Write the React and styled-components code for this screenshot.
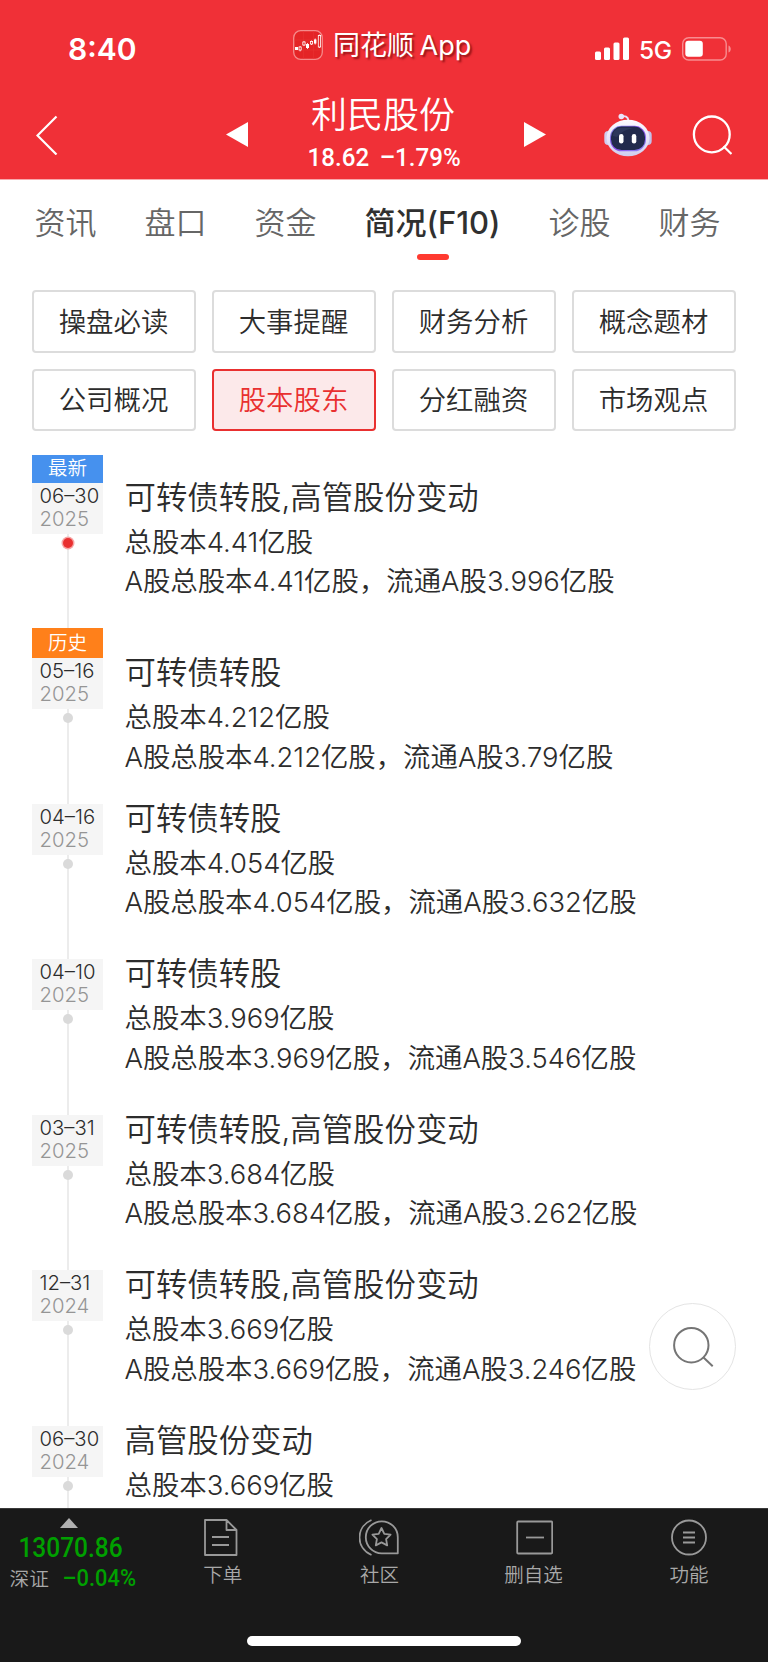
import React from "react";
import styled, { createGlobalStyle } from "styled-components";

const GlobalStyle = createGlobalStyle`
  * {
    box-sizing: border-box;
  }
  body {
    margin: 0;
    background: #fff;
    font-family: Inter, "Noto Sans CJK SC", sans-serif;
    font-weight: 350;
    color: #2c2c2c;
  }
`;

const tabs = ["资讯", "盘口", "资金", "简况(F10)", "诊股", "财务"];

const sections = [
  "操盘必读",
  "大事提醒",
  "财务分析",
  "概念题材",
  "公司概况",
  "股本股东",
  "分红融资",
  "市场观点",
];

const records = [
  {
    tag: "最新",
    color: "#4691ee",
    tagHeight: 28,
    date: "06–30",
    year: "2025",
    title: "可转债转股,高管股份变动",
    total: "总股本4.41亿股",
    detail: "A股总股本4.41亿股，流通A股3.996亿股",
  },
  {
    tag: "历史",
    color: "#ff801a",
    tagHeight: 30,
    date: "05–16",
    year: "2025",
    title: "可转债转股",
    total: "总股本4.212亿股",
    detail: "A股总股本4.212亿股，流通A股3.79亿股",
  },
  {
    date: "04–16",
    year: "2025",
    title: "可转债转股",
    total: "总股本4.054亿股",
    detail: "A股总股本4.054亿股，流通A股3.632亿股",
  },
  {
    date: "04–10",
    year: "2025",
    title: "可转债转股",
    total: "总股本3.969亿股",
    detail: "A股总股本3.969亿股，流通A股3.546亿股",
  },
  {
    date: "03–31",
    year: "2025",
    title: "可转债转股,高管股份变动",
    total: "总股本3.684亿股",
    detail: "A股总股本3.684亿股，流通A股3.262亿股",
  },
  {
    date: "12–31",
    year: "2024",
    title: "可转债转股,高管股份变动",
    total: "总股本3.669亿股",
    detail: "A股总股本3.669亿股，流通A股3.246亿股",
  },
  {
    date: "06–30",
    year: "2024",
    title: "高管股份变动",
    total: "总股本3.669亿股",
  },
];

const AppLogo = () => (
  <svg width="30" height="30" viewBox="0 0 30 30">
    <rect x="0.7" y="0.7" width="28.6" height="28.6" rx="7" fill="#e42426" stroke="#f58a8a" strokeWidth="1.3" />
    <path d="M10.5 1v28M20.5 1v28M1 10h28M1 20h28" stroke="#e93535" strokeWidth="0.5" />
    <g fill="#fff">
      <rect x="2" y="17" width="3" height="3" />
      <rect x="13" y="14" width="3" height="4" />
      <rect x="21" y="9.5" width="2.4" height="4" />
    </g>
    <g fill="none" stroke="#fff" strokeWidth="0.8">
      <rect x="6" y="17" width="2.2" height="3" />
      <path d="M7.1 16V17M7.1 20v1.4M11 11v1M11 15v1M14.5 13v6M18.5 10.500v1M18.5 14v1M22.2 8.5v6M26.4 4.500v1M26.4 17v1" />
      <rect x="9.8" y="12" width="2.3" height="3" />
      <rect x="17.4" y="11.5" width="2.2" height="2.5" />
      <rect x="25.3" y="5.5" width="2.3" height="11.5" />
    </g>
  </svg>
);

const Robot = () => (
  <svg width="50" height="46" viewBox="0 0 50 46">
    <defs>
      <linearGradient id="shell" x1="0" y1="0" x2="0" y2="1">
        <stop offset="0" stopColor="#fdfaff" />
        <stop offset="0.6" stopColor="#e4e0f7" />
        <stop offset="1" stopColor="#cfcdef" />
      </linearGradient>
      <linearGradient id="visor" x1="0" y1="0" x2="1" y2="1">
        <stop offset="0" stopColor="#7b8ce0" />
        <stop offset="0.5" stopColor="#8a4bea" />
        <stop offset="1" stopColor="#8d8cf5" />
      </linearGradient>
    </defs>
    <path d="M18 4.500c4-1 7 0 7.500 4" fill="none" stroke="#e8e2f8" strokeWidth="1.9" />
    <circle cx="18.300" cy="4.500" r="2.800" fill="#eae4fa" />
    <rect x="1.300" y="19" width="8" height="14" rx="4" fill="#d0cdf0" />
    <rect x="40.700" y="19" width="8" height="14" rx="4" fill="#c4c0ea" />
    <ellipse cx="25" cy="26" rx="21.500" ry="18.300" fill="url(#shell)" />
    <rect x="7" y="13.800" width="36" height="25.500" rx="11.500" fill="url(#visor)" />
    <rect x="8" y="14.600" width="34" height="23.500" rx="10.500" fill="#222a4c" />
    <path d="M10 24c0-6 4-8 9-8h12c-7 1-13 4-17 9z" fill="#38436a" opacity="0.5" />
    <rect x="16" y="22" width="4.500" height="9.500" rx="2.200" fill="#fff" />
    <rect x="28.800" y="22" width="4.500" height="9.500" rx="2.200" fill="#fff" />
  </svg>
);

const SearchIcon = () => (
  <svg width="40" height="40" viewBox="0 0 40 40" fill="none" stroke="#fff" strokeWidth="2.3">
    <circle cx="19.800" cy="19.400" r="17.900" />
    <path d="M31.500 31.200l8 7.800" />
  </svg>
);

const FloatingSearchIcon = () => (
  <svg width="42" height="42" viewBox="0 0 42 42" fill="none" stroke="#757575" strokeWidth="2">
    <circle cx="19.300" cy="19.200" r="17.200" />
    <path d="M31 31l9.700 9.300" />
  </svg>
);

const OrderIcon = () => (
  <svg width="40" height="38" viewBox="0 0 40 38">
    <path d="M2 1h21.500l10 10v25h-31.500zM23.500 1v10h10M9 18h17M9 26h17" />
  </svg>
);

const CommunityIcon = () => (
  <svg width="42" height="38" viewBox="0 0 42 38">
    <path d="M12.500 1C-3.500 8-3.500 29 12.500 36" />
    <path d="M22.800 2.300a16 16 0 1 0 0 32h16V18.300a16 16 0 0 0-16-16z" />
    <path d="M22.500 9l2.800 5.800 6.300.9-4.500 4.400 1.100 6.300-5.700-3-5.700 3 1.100-6.300-4.500-4.400 6.300-.9z" />
  </svg>
);

const RemoveIcon = () => (
  <svg width="38" height="38" viewBox="0 0 38 38">
    <rect x="2.200" y="2.500" width="35" height="32" rx="1" />
    <path d="M11 18.500h18" />
  </svg>
);

const MenuIcon = () => (
  <svg width="38" height="38" viewBox="0 0 38 38">
    <circle cx="19" cy="18.500" r="17" />
    <path d="M13 13.500h12M13 18.500h12M13 23.500h12" />
  </svg>
);

const navItems = [
  { label: "下单", Icon: OrderIcon },
  { label: "社区", Icon: CommunityIcon },
  { label: "删自选", Icon: RemoveIcon },
  { label: "功能", Icon: MenuIcon },
];

const App = () => {
  return (
    <>
      <GlobalStyle />
      <Screen>
        <Header>
          <StatusBar>
            <Clock>8:40</Clock>
            <Brand>
              <AppLogo />
              <span>同花顺 App</span>
            </Brand>
            <Signals>
              <svg width="34" height="23" viewBox="0 0 34 23" fill="#fff">
                <rect x="0" y="14.500" width="6" height="8.500" rx="1.500" />
                <rect x="9" y="10.500" width="6" height="12.500" rx="1.500" />
                <rect x="18.500" y="5.500" width="6" height="17.500" rx="1.500" />
                <rect x="28" y="0.500" width="6" height="22.500" rx="1.500" />
              </svg>
              <Network>5G</Network>
              <svg width="50" height="24" viewBox="0 0 50 24">
                <rect x="0.700" y="0.700" width="43.500" height="22.300" rx="6" fill="none" stroke="#f88c90" strokeWidth="1.400" />
                <rect x="3.300" y="3.800" width="17.500" height="16" rx="3" fill="#fff" />
                <path d="M46.500 8.500c3 1 3 6 0 7z" fill="#f88c90" />
              </svg>
            </Signals>
          </StatusBar>
          <TitleBar>
            <svg width="24" height="40" viewBox="0 0 24 40" fill="none" stroke="#fff" strokeWidth="2.2">
              <path d="M20.500 1.500L1.500 20.500l19 19" />
            </svg>
            <Arrow viewBox="0 0 22 25">
              <path d="M22 0v25L0 12.500z" />
            </Arrow>
            <Stock>
              <StockName>利民股份</StockName>
              <StockPrice>18.62 –1.79%</StockPrice>
            </Stock>
            <Arrow viewBox="0 0 22 25">
              <path d="M0 0v25l22-12.500z" />
            </Arrow>
            <Robot />
            <SearchIcon />
          </TitleBar>
        </Header>

        <Tabs>
          {tabs.map((tab) => (
            <Tab key={tab} $active={tab === "简况(F10)"}>
              {tab}
            </Tab>
          ))}
        </Tabs>

        <Sections>
          {sections.map((name) => (
            <Section key={name} $active={name === "股本股东"}>
              {name}
            </Section>
          ))}
        </Sections>

        <Timeline>
          {records.map((item, i) => (
            <Record key={i} $tagHeight={item.tagHeight}>
              <Rail>
                {item.tag && (
                  <Tag $color={item.color} $height={item.tagHeight}>
                    {item.tag}
                  </Tag>
                )}
                <DateBox>
                  <div>{item.date}</div>
                  <Year>{item.year}</Year>
                </DateBox>
                <Track>
                  <Dot $current={i === 0} />
                </Track>
              </Rail>
              <Body $tagHeight={item.tagHeight}>
                <RecordTitle>{item.title}</RecordTitle>
                <RecordLine>{item.total}</RecordLine>
                {item.detail && <RecordLine>{item.detail}</RecordLine>}
              </Body>
            </Record>
          ))}
        </Timeline>

        <SearchButton>
          <FloatingSearchIcon />
        </SearchButton>

        <BottomBar>
          <NavRow>
            <Index>
              <Caret viewBox="0 0 18 10">
                <path d="M9 0l9 10H0z" />
              </Caret>
              <IndexValue>13070.86</IndexValue>
              <IndexChange>
                <span>深证</span>
                <Percent>–0.04%</Percent>
              </IndexChange>
            </Index>
            {navItems.map(({ label, Icon }) => (
              <NavItem key={label}>
                <Icon />
                <span>{label}</span>
              </NavItem>
            ))}
          </NavRow>
          <HomeIndicator />
        </BottomBar>
      </Screen>
    </>
  );
};

const Screen = styled.div`
  position: relative;
  display: flex;
  flex-direction: column;
  width: 768px;
  height: 1662px;
  overflow: hidden;
  background: #fff;
`;

const Header = styled.header`
  height: 180px;
  flex: none;
  border-bottom: 1px solid #f8a9ac;
  background: #f03037;
  color: #fff;
`;

const StatusBar = styled.div`
  display: grid;
  grid-template-columns: 293px 1fr 173px;
  height: 90px;
`;

const Clock = styled.div`
  padding: 31px 0 0 68px;
  font-size: 30px;
  line-height: 36px;
  font-weight: 600;
`;

const Brand = styled.div`
  display: flex;
  align-items: flex-start;
  gap: 10px;
  padding-top: 30px;
  font-size: 27px;
  line-height: 31px;
  font-weight: 400;
  white-space: nowrap;
  word-spacing: -2px;
  span {
    text-shadow: 2px 2px 2px rgba(90, 0, 0, 0.6);
  }
`;

const Signals = styled.div`
  display: flex;
  align-items: flex-start;
  padding-top: 37px;
`;

const Network = styled.div`
  width: 53px;
  padding-left: 10px;
  font-size: 24.5px;
  line-height: 27px;
  font-weight: 450;
  letter-spacing: -0.5px;
`;

const TitleBar = styled.div`
  display: grid;
  grid-template-columns: 190px 22px 276px 79px 89px 1fr;
  align-items: start;
  height: 89px;
  padding-left: 36px;
  > svg {
    margin-top: 25px;
  }
  > svg:nth-child(5) {
    margin-top: 22px;
  }
`;

const Arrow = styled.svg`
  width: 22px;
  height: 25px;
  fill: #fff;
  && {
    margin-top: 32px;
  }
`;

const Stock = styled.div`
  display: flex;
  flex-direction: column;
  align-items: center;
  padding-right: 6px;
  white-space: nowrap;
`;

const StockName = styled.div`
  margin-top: 5px;
  font-size: 36px;
  line-height: 40px;
`;

const StockPrice = styled.div`
  margin: 6px 0 0 3px;
  font-family: Roboto, sans-serif;
  font-size: 26.5px;
  line-height: 32px;
  font-weight: 500;
  word-spacing: 5px;
  transform: scaleX(0.91);
`;

const Tabs = styled.nav`
  display: flex;
  flex: none;
  gap: 48px;
  height: 110px;
  padding: 22px 0 0 34.5px;
`;

const Tab = styled.div`
  display: flex;
  flex-direction: column;
  align-items: center;
  font-size: 31px;
  line-height: 41px;
  white-space: nowrap;
  color: ${(props) => (props.$active ? "#303030" : "#666")};
  font-weight: ${(props) => (props.$active ? 500 : 350)};
  &::after {
    content: "";
    width: 32px;
    height: 6px;
    margin-top: 11px;
    border-radius: 3px;
    background: ${(props) => (props.$active ? "#ff3a30" : "transparent")};
  }
`;

const Sections = styled.div`
  display: grid;
  flex: none;
  grid-template-columns: repeat(4, 164px);
  grid-auto-rows: 62.5px;
  gap: 16px;
  padding: 0 32px;
`;

const Section = styled.div`
  display: flex;
  align-items: center;
  justify-content: center;
  padding: 0 1px 3px 0;
  border: 2px solid ${(props) => (props.$active ? "#e93030" : "#dcdcdc")};
  border-radius: 4px;
  background: ${(props) => (props.$active ? "#fce9ea" : "#fff")};
  color: ${(props) => (props.$active ? "#e93030" : "#2c2c2c")};
  font-size: 27.4px;
`;

const Timeline = styled.div`
  flex: 1;
  min-height: 0;
  overflow: hidden;
  padding: 24px 0 0 32px;
`;

const Record = styled.div`
  display: grid;
  grid-template-columns: 71px 1fr;
  column-gap: 21.5px;
  height: ${(props) => 145.4 + (props.$tagHeight || 10)}px;
  &:nth-child(n + 3) {
    height: 155.5px;
  }
`;

const Rail = styled.div`
  display: flex;
  flex-direction: column;
`;

const Tag = styled.div`
  height: ${(props) => props.$height}px;
  background: ${(props) => props.$color};
  color: #fff;
  font-size: 19.5px;
  line-height: ${(props) => (props.$height > 28 ? 31 : 26)}px;
  text-align: center;
`;

const DateBox = styled.div`
  height: 51px;
  padding: 1px 0 0 7.5px;
  background: #f5f5f5;
  font-size: 20.3px;
  line-height: 24px;
  white-space: nowrap;
`;

const Year = styled.div`
  margin-top: -1px;
  color: #959595;
`;

const Track = styled.div`
  display: flex;
  flex: 1;
  justify-content: center;
  padding-left: 1px;
  background: linear-gradient(#ececec, #ececec) 35px 0 / 2px 100% no-repeat;
`;

const Dot = styled.div`
  width: 10px;
  height: 10px;
  margin-top: 4px;
  border-radius: 50%;
  background: ${(props) => (props.$current ? "#e93030" : "#dadada")};
  box-shadow: ${(props) => (props.$current ? "0 0 0 1.5px #f6a5a5" : "none")};
`;

const Body = styled.div`
  padding-top: ${(props) => props.$tagHeight || 0}px;
  white-space: nowrap;
`;

const RecordTitle = styled.div`
  margin: -7px 0 2px;
  font-size: 31.4px;
  line-height: 45px;
`;

const RecordLine = styled.div`
  font-size: 27.4px;
  line-height: 39.3px;
`;

const SearchButton = styled.div`
  position: absolute;
  right: 32px;
  bottom: 272px;
  display: flex;
  align-items: center;
  justify-content: center;
  width: 87px;
  height: 87px;
  border: 1.5px solid #e4e4e4;
  border-radius: 50%;
  background: #fff;
`;

const BottomBar = styled.footer`
  display: flex;
  flex: none;
  flex-direction: column;
  align-items: center;
  justify-content: space-between;
  height: 154px;
  padding-bottom: 16px;
  border-top: 1px solid #3a3a3a;
  background: #191919;
`;

const NavRow = styled.div`
  display: grid;
  grid-template-columns: 145px 155.5px 158px 150px 161px;
  width: 768px;
`;

const Index = styled.div`
  display: flex;
  flex-direction: column;
  align-items: center;
  padding-top: 9px;
  color: #00a000;
  font-family: Roboto, "Noto Sans CJK SC", sans-serif;
  font-weight: 500;
  white-space: nowrap;
`;

const Caret = styled.svg`
  width: 18px;
  height: 10px;
  margin-right: 7px;
  fill: #b0b0b0;
`;

const IndexValue = styled.div`
  margin: 5px 4px 0 0;
  font-size: 27.5px;
  line-height: 30px;
  transform: scaleX(0.89);
`;

const IndexChange = styled.div`
  display: flex;
  justify-content: space-between;
  width: 126px;
  line-height: 33px;
  span {
    color: #a8a8a8;
    font-size: 19.7px;
    font-weight: 350;
  }
`;

const Percent = styled.div`
  font-size: 23.5px;
  line-height: 31px;
  transform: scaleX(0.93);
  transform-origin: right;
`;

const NavItem = styled.div`
  display: flex;
  flex-direction: column;
  align-items: center;
  gap: 4px;
  padding-top: 10px;
  color: #a8a8a8;
  font-size: 19.5px;
  line-height: 28px;
  svg {
    fill: none;
    stroke: #999;
    stroke-width: 1.8;
    stroke-linejoin: round;
  }
`;

const HomeIndicator = styled.div`
  width: 274px;
  height: 10px;
  border-radius: 5px;
  background: #fff;
`;

export default App;
